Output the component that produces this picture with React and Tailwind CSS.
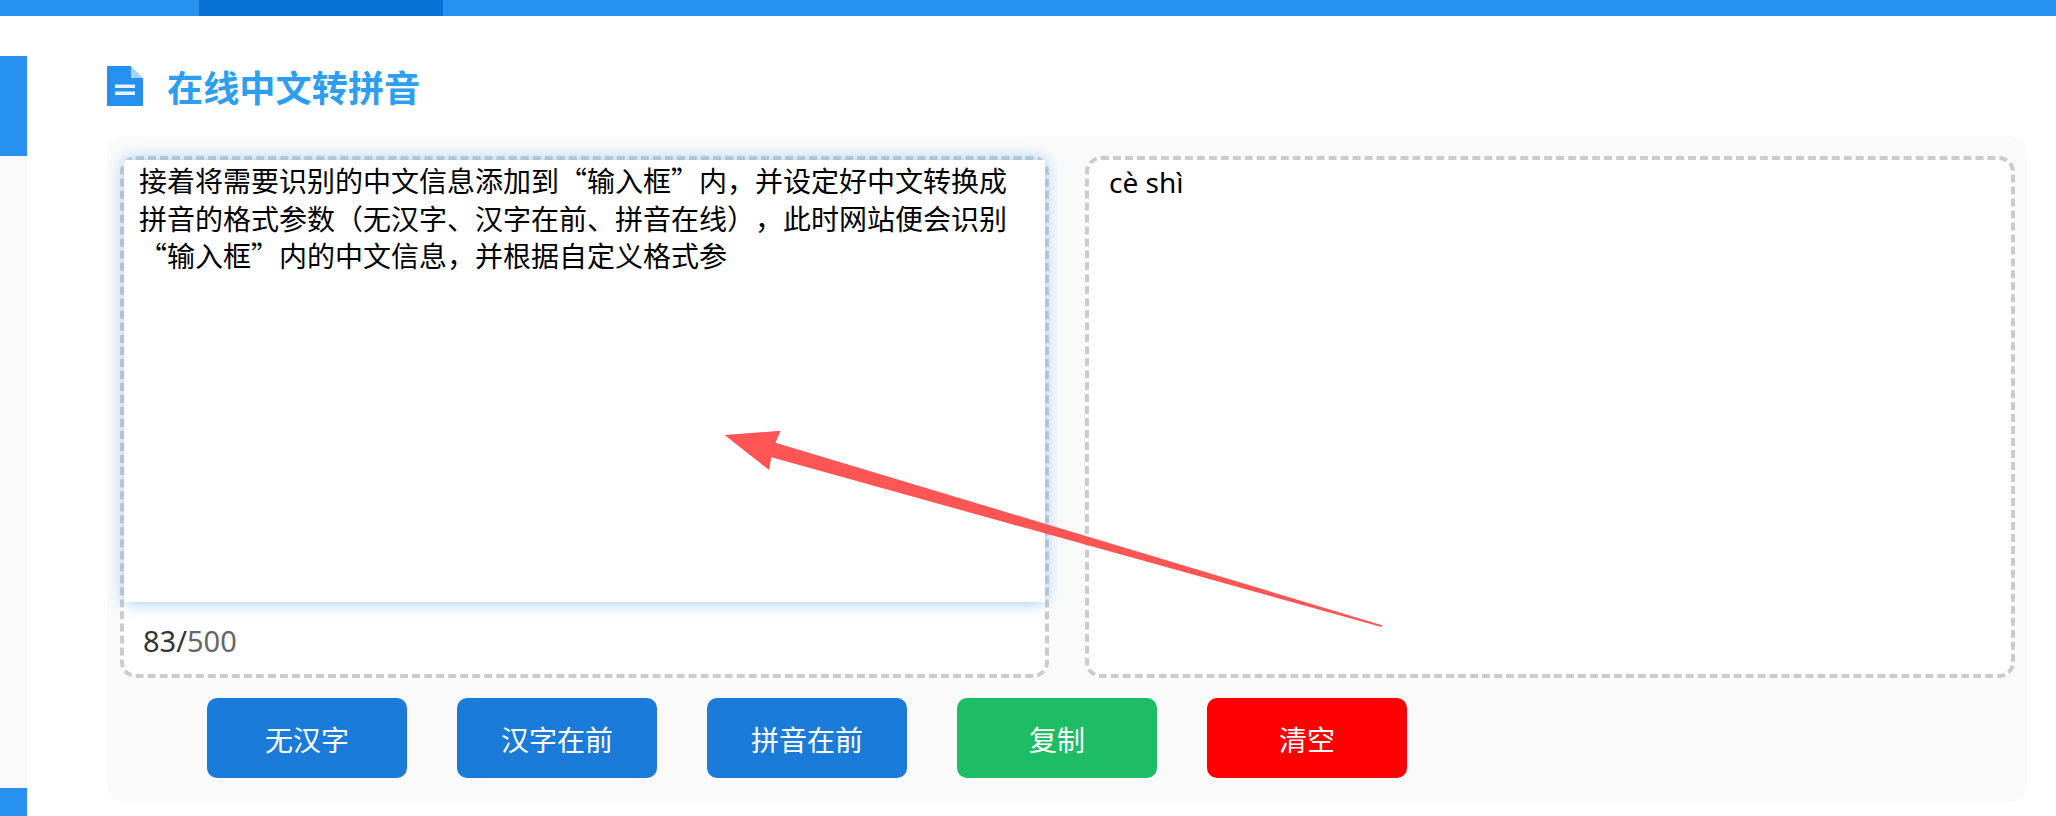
export default function App() {
  const btn = "flex h-[80px] w-[200px] items-center justify-center rounded-[10px] pt-[2px] text-[28px] text-white font-['Noto_Sans_CJK_SC','Noto_Sans',sans-serif]";
  return (
    <div className="relative h-[816px] w-[2056px] overflow-hidden bg-white font-['Noto_Sans','Noto_Sans_CJK_SC',sans-serif]">
      <div className="flex h-[16px] bg-[#2791f0]">
        <div className="w-[199px]" />
        <div className="w-[244px] bg-[#0672d6]" />
      </div>
      <div className="flex">
        <div className="mt-[40px] flex w-[27px] flex-col">
          <div className="h-[100px] bg-[#2791f0]" />
          <div className="h-[632px] bg-[#fafafa]" />
          <div className="h-[28px] bg-[#2791f0]" />
        </div>
        <div className="ml-[80px] w-[1920px]">
          <div className="flex h-[120px] items-start pt-[50px]">
            <svg width="36" height="40" viewBox="0 0 36 40" className="shrink-0">
              <path d="M0 0H24V12H36V40H0Z" fill="#2590f0" />
              <path d="M24 0L36 12H24Z" fill="#a6d2f8" />
              <rect x="8" y="18.5" width="20" height="3.5" fill="#e8f3fd" />
              <rect x="8" y="25.5" width="20" height="3.5" fill="#e8f3fd" />
            </svg>
            <h1 className="ml-[24px] text-[36.2px] leading-[44px] font-bold text-[#2e9ff0]">在线中文转拼音</h1>
          </div>
          <div className="rounded-[18px] bg-[#fafafa] pt-[20px] pr-[12px] pb-[24px] pl-[13px]">
            <div className="flex gap-[36px]">
              <div className="h-[522px] w-[929px] rounded-[16px] border-4 border-dashed border-[#cccccc] bg-white">
                <div className="h-[442px] rounded-tl-[3px] bg-white pt-[2px] pl-[15px] font-['Noto_Sans_CJK_SC',sans-serif] text-[28px] leading-[37.5px] text-black shadow-[0_0_16px_rgba(125,185,240,0.85)] [text-spacing-trim:space-all]">
                  <div>接着将需要识别的中文信息添加到“输入框”内，并设定好中文转换成</div>
                  <div>拼音的格式参数（无汉字、汉字在前、拼音在线），此时网站便会识别</div>
                  <div>“输入框”内的中文信息，并根据自定义格式参</div>
                </div>
                <div className="pt-[20px] pl-[19px] text-[29px] leading-[38px] text-[#666666]">
                  <span className="text-[#333333]">83/</span>500
                </div>
              </div>
              <div className="h-[522px] w-[930px] rounded-[16px] border-4 border-dashed border-[#cccccc] bg-white pt-[4px] pl-[20px] text-[28px] leading-[37.5px] text-black">
                cè shì
              </div>
            </div>
            <div className="mt-[20px] ml-[87px] flex gap-[50px]">
              <div className={`${btn} bg-[#1a7bd9]`}>无汉字</div>
              <div className={`${btn} bg-[#1a7bd9]`}>汉字在前</div>
              <div className={`${btn} bg-[#1a7bd9]`}>拼音在前</div>
              <div className={`${btn} bg-[#1dbd65]`}>复制</div>
              <div className={`${btn} bg-[#ff0000]`}>清空</div>
            </div>
          </div>
        </div>
      </div>
      <svg className="pointer-events-none absolute top-0 left-0" width="2056" height="816" viewBox="0 0 2056 816">
        <path d="M724.5 435 L780.6 430.7 L775.5 442.7 L1382 625.2 L1381.5 627 L771.4 457.3 L769 470 Z" fill="#ff5555" />
      </svg>
    </div>
  );
}
